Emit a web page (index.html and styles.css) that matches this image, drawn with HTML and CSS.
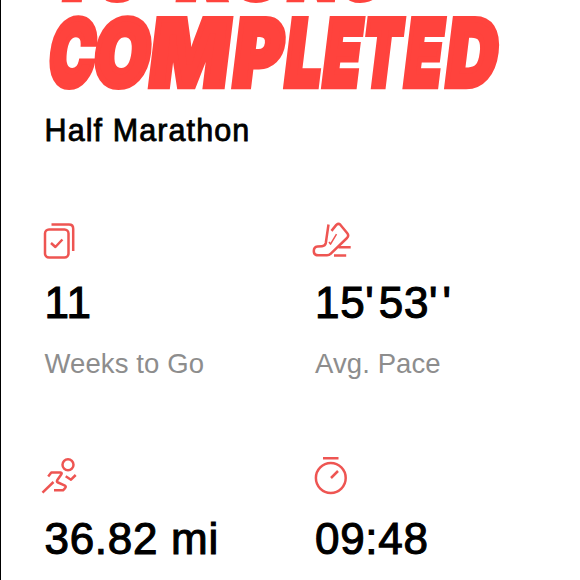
FILE: index.html
```html
<!DOCTYPE html>
<html lang="en">
<head>
<meta charset="utf-8">
<title>Training Plan</title>
<link rel="stylesheet" href="styles.css">
</head>
<body>
<main class="plan">
  <svg class="headline" viewBox="0 0 580 104" role="heading" aria-level="1">
    <g transform="translate(0 -1.3) skewX(-7)">
      <text x="49" textLength="34" lengthAdjust="spacingAndGlyphs">1</text><text x="91" textLength="53" lengthAdjust="spacingAndGlyphs">0</text>
      <text x="175" textLength="51" lengthAdjust="spacingAndGlyphs">R</text><text x="229" textLength="55" lengthAdjust="spacingAndGlyphs">U</text><text x="286" textLength="50" lengthAdjust="spacingAndGlyphs">N</text><text x="338" textLength="44" lengthAdjust="spacingAndGlyphs">S</text>
    </g>
    <g transform="translate(0 86.2) skewX(-7)">
      <text x="46" textLength="46" lengthAdjust="spacingAndGlyphs">C</text><text x="91" textLength="56" lengthAdjust="spacingAndGlyphs">O</text><text x="147" textLength="79" lengthAdjust="spacingAndGlyphs">M</text><text x="230.5" textLength="49" lengthAdjust="spacingAndGlyphs">P</text><text x="282.5" textLength="36" lengthAdjust="spacingAndGlyphs">L</text><text x="320.5" textLength="37" lengthAdjust="spacingAndGlyphs">E</text><text x="359.5" textLength="38" lengthAdjust="spacingAndGlyphs">T</text><text x="402" textLength="37" lengthAdjust="spacingAndGlyphs">E</text><text x="443.5" textLength="51" lengthAdjust="spacingAndGlyphs">D</text>
    </g>
  </svg>
  <h2 class="subtitle">Half Marathon</h2>
  <section class="stats">
    <article class="stat">
      <svg class="icon" viewBox="0 0 60 60"><rect x="15" y="19.5" width="23.5" height="28" rx="4"/><path d="M21.5 14.5H39q4.2 0 4.2 4.2V41M21 33l4.4 4 7-7.5"/></svg>
      <p class="value">11</p>
      <p class="label">Weeks to Go</p>
    </article>
    <article class="stat">
      <svg class="icon" viewBox="0 0 60 60"><path d="M27.5 14.5 24.8 33q-.6 3-3.8 3.2l-4.5.3Q12.8 37 12.8 41q0 4.3 4.4 4.3H26q2.2 0 3.8-1.7L46 28q2.2-2.4.3-4.8l-7-8.5q-1.8-1.7-4 .2l-4.8 6M37.5 37.3h12.2M33 45.5h12.2"/><path class="thin" d="m28 32 1.5 2.2 6-10"/></svg>
      <p class="value">15<span class="tick">'</span>53<span class="tick">'</span><span class="tick">'</span></p>
      <p class="label">Avg. Pace</p>
    </article>
    <article class="stat">
      <svg class="icon" viewBox="0 0 60 60"><circle cx="38" cy="18.7" r="5.5"/><path d="M18.2 30.5 21.3 26.5h9.2q2 .3.7 2l-4 5.8q-.9 1.5.8 2.2l6.5 2.8q2.3 1.2.4 3L33 44.3h-9M23.5 36 12.5 46.7M35.7 30.2l5.3 3.5 4.7-4.7"/></svg>
      <p class="value">36.82 mi</p>
    </article>
    <article class="stat">
      <svg class="icon" viewBox="0 0 60 60"><circle cx="29.8" cy="32" r="14.9"/><path d="M22 12.3h15.5M30 32l7-7"/></svg>
      <p class="value">09:48</p>
    </article>
  </section>
</main>
</body>
</html>
```
FILE: styles.css
```css
* { box-sizing: border-box; margin: 0; padding: 0; }
html, body { height: 580px; overflow: hidden; background: #fff; }
body { font-family: "Liberation Sans", Arial, sans-serif; color: #000; }
.plan { height: 580px; overflow: hidden; border-left: 1px solid #000; }
.headline { display: block; width: 580px; height: 104px; margin-left: -1px; }
.headline text {
  font: 900 91.8px Inter, sans-serif;
  fill: #ff433d; stroke: #ff433d; stroke-width: 6.4;
}
.subtitle {
  margin-left: 43.5px; height: 54px; line-height: 53px;
  font-size: 30.5px; font-weight: 400; letter-spacing: 1.1px;
  -webkit-text-stroke: .8px #000;
}
.stats {
  display: grid; grid-template-columns: 270.5px 270.5px;
  grid-auto-rows: 235.5px; margin: 52px 0 0 29px; width: 541px;
}
.icon {
  display: block; width: 60px; height: 60px; fill: none;
  stroke: #ee5552; stroke-width: 2.5; stroke-linejoin: round;
}
.icon .thin { stroke-width: 1.5; }
.value {
  margin: 8px 0 0 14.5px; height: 50px; line-height: 50px;
  font-size: 44px; letter-spacing: .7px; white-space: nowrap;
  -webkit-text-stroke: 1.1px #000;
}
.tick { letter-spacing: 5px; }
.label {
  margin: 11px 0 0 14.5px; height: 50px; line-height: 50px;
  font-size: 27.5px; letter-spacing: .1px; color: #8d8d8d;
}
```
